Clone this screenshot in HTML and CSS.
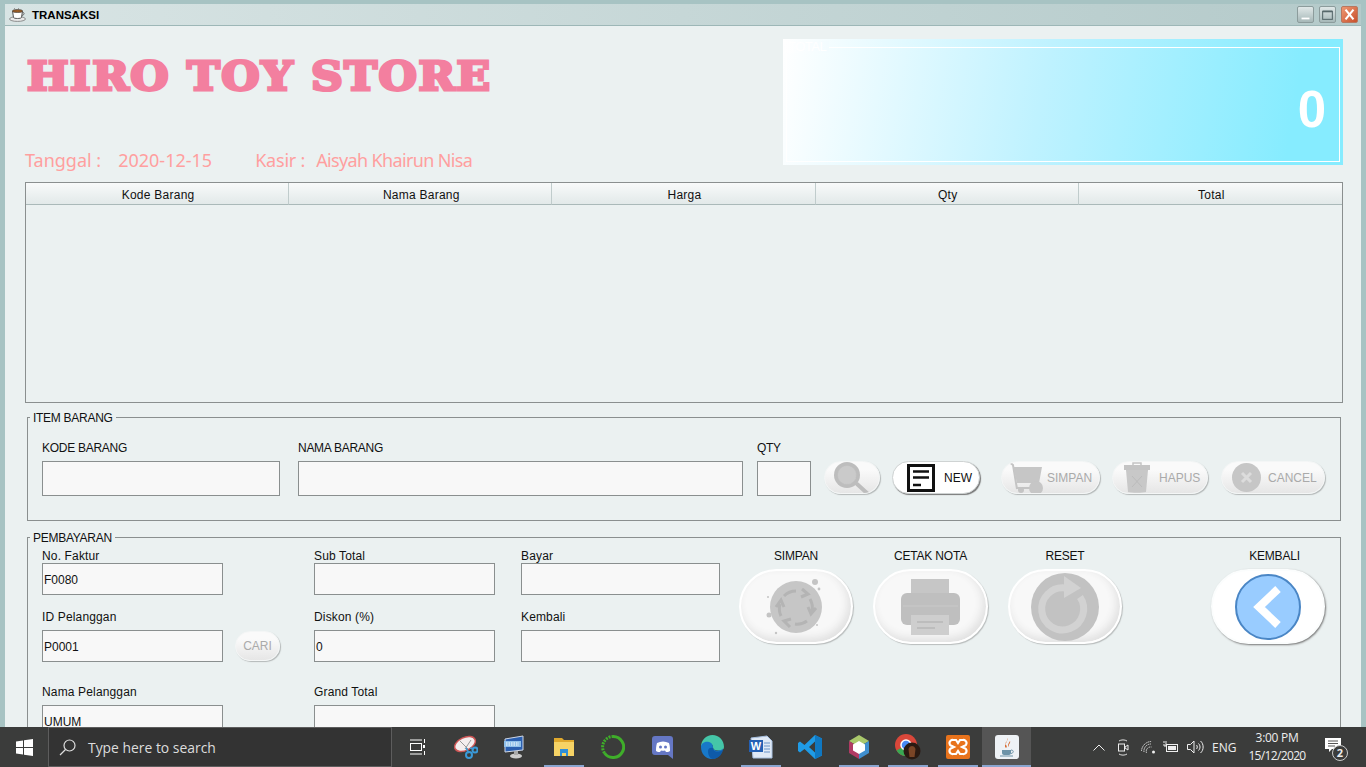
FILE: index.html
```html
<!DOCTYPE html>
<html lang="id">
<head>
<meta charset="utf-8">
<title>TRANSAKSI</title>
<link rel="stylesheet" href="styles.css">
</head>
<body>
<div class="screen">
  <main class="window">
    <header class="titlebar">
      <svg class="title-icon" viewBox="0 0 17 14"><ellipse cx="8.5" cy="11" rx="8" ry="2.4" fill="#e8e8e8" stroke="#777" stroke-width=".8"/><path d="M3.5 3h10l-1 6.5c-.3 1.3-7.700 1.300-8 0z" fill="#fff" stroke="#555"/><ellipse cx="8.500" cy="3" rx="5" ry="1.500" fill="#9a5b22" stroke="#444" stroke-width=".7"/><path d="M13.300 4.500c2.500-.5 2.500 2.500-.5 3" fill="none" stroke="#666"/><path d="M5 1l1-1M9 1l1-1" stroke="#999"/></svg>
      <span class="title-text">TRANSAKSI</span>
      <div class="win-controls">
        <span class="win-btn"><svg viewBox="0 0 17 17"><path d="M4 13h9" stroke="#fff" stroke-width="2"/></svg></span>
        <span class="win-btn"><svg viewBox="0 0 17 17"><rect x="3" y="5" width="11" height="9" fill="none" stroke="#56686a" stroke-width="1.200"/><path d="M3 5h11" stroke="#56686a" stroke-width="2"/></svg></span>
        <span class="win-btn win-close"><svg viewBox="0 0 17 17"><path d="M4 3l9 11M13 3L4 14" stroke="#fff" stroke-width="2.400"/></svg></span>
      </div>
    </header>

    <div class="content">
      <section class="head">
        <div class="brand">
          <h1 class="store">HIRO TOY STORE</h1>
          <p class="meta"><span class="meta-date">Tanggal :</span><span class="meta-date-v">2020-12-15</span><span class="meta-kasir">Kasir :</span><span class="meta-kasir-v">Aisyah Khairun Nisa</span></p>
        </div>
        <div class="total"><span class="total-legend">TOTAL</span><div class="total-inner">0</div></div>
      </section>

      <section class="table">
        <div class="thead">
          <div class="th">Kode Barang</div>
          <div class="th">Nama Barang</div>
          <div class="th">Harga</div>
          <div class="th">Qty</div>
          <div class="th th-last">Total</div>
        </div>
      </section>

      <section class="group group-item">
        <span class="legend caps">ITEM BARANG</span>
        <div class="item-row">
          <div class="field w-kode"><label class="label caps lb-6">KODE BARANG</label><div class="input in-35"></div></div>
          <div class="field w-nama"><label class="label caps lb-6">NAMA BARANG</label><div class="input in-35"></div></div>
          <div class="field w-qty"><label class="label caps lb-6">QTY</label><div class="input in-35"></div></div>
          <div class="pills">
            <button class="pill p-search off">
              <svg class="ic-search" viewBox="0 0 36 33"><circle cx="13" cy="13" r="13" fill="#bdbdbd"/><circle cx="13" cy="13" r="9.500" fill="#cacaca" stroke="#bfbfbf" stroke-dasharray="1 1"/><path d="M23 22l11 10" stroke="#bdbdbd" stroke-width="4" stroke-linecap="round"/></svg>
            </button>
            <button class="pill p-new">
              <svg class="ic-new" viewBox="0 0 28 28"><rect x="1.500" y="1.500" width="25" height="25" fill="#fff" stroke="#111" stroke-width="3"/><path d="M6 7.500h16M6 13.500h16" stroke="#111" stroke-width="2.500"/><path d="M6 21h8" stroke="#111" stroke-width="2.500"/></svg>
              <span class="pill-text">NEW</span>
            </button>
            <button class="pill p-simpan off">
              <svg class="ic-cart" viewBox="0 0 36 34"><path d="M1 1l4 3 4 24" fill="none" stroke="#c4c4c4" stroke-width="2"/><path d="M5 6h29l-3 16H9z" fill="#c6c6c6"/><path d="M8 27h18" stroke="#c4c4c4" stroke-width="2"/><circle cx="13" cy="29" r="3" fill="#c4c4c4"/><circle cx="28" cy="27" r="7" fill="#c6c6c6"/></svg>
              <span class="pill-text">SIMPAN</span>
            </button>
            <button class="pill p-hapus off">
              <svg class="ic-bin" viewBox="0 0 26 31"><path d="M9 3V1h8v2" fill="none" stroke="#c4c4c4" stroke-width="1.500"/><path d="M0 3h26v5H0z" fill="#c4c4c4"/><path d="M2 8h22l-2 22c-3 1-15 1-18 0z" fill="#c8c8c8"/><path d="M8 14l10 11M18 14L8 25" stroke="#bcbcbc"/></svg>
              <span class="pill-text">HAPUS</span>
            </button>
            <button class="pill p-cancel off">
              <svg class="ic-cancel" viewBox="0 0 29 29"><circle cx="14.500" cy="14.500" r="14.500" fill="#c6c6c6"/><path d="M10 10l9 9M19 10l-9 9" stroke="#dcdcdc" stroke-width="3"/></svg>
              <span class="pill-text">CANCEL</span>
            </button>
          </div>
        </div>
      </section>

      <section class="group group-pay">
        <span class="legend caps">PEMBAYARAN</span>
        <div class="pay">
          <div class="pay-grid">
            <div class="field"><label class="label">No. Faktur</label><div class="input in-32">F0080</div></div>
            <div></div>
            <div class="field"><label class="label">Sub Total</label><div class="input in-32"></div></div>
            <div></div>
            <div class="field"><label class="label">Bayar</label><div class="input in-32"></div></div>

            <div class="field"><label class="label lb-6">ID Pelanggan</label><div class="input in-32">P0001</div></div>
            <div><button class="pill p-cari off"><span class="pill-text">CARI</span></button></div>
            <div class="field"><label class="label lb-6">Diskon (%)</label><div class="input in-32">0</div></div>
            <div></div>
            <div class="field"><label class="label lb-6">Kembali</label><div class="input in-32"></div></div>

            <div class="field"><label class="label lb-6">Nama Pelanggan</label><div class="input in-32 in-umum">UMUM</div></div>
            <div></div>
            <div class="field"><label class="label lb-6">Grand Total</label><div class="input in-32"></div></div>
          </div>
          <div class="actions">
            <div class="action a-simpan">
              <span class="label caps-s lb-6 center">SIMPAN</span>
              <button class="big off">
                <svg class="ic-52" viewBox="0 0 64 64"><circle cx="32" cy="32" r="26" fill="#c6c6c6"/><path d="M20 21a17 17 0 0 1 12-5M38 14l6 5-7 3M46 24a17 17 0 0 1 2 12M52 33l-5 6-3-7M43 46a17 17 0 0 1-12 3M26 52l-6-6 7-2M17 41a17 17 0 0 1-1-12M12 32l5-7 3 7" fill="none" stroke="#b4b4b4" stroke-width="3"/><circle cx="51" cy="7" r="3" fill="#c4c4c4"/><circle cx="55" cy="14" r="1.400" fill="#c4c4c4"/><circle cx="4" cy="22" r="1" fill="#c4c4c4"/><circle cx="5" cy="40" r="2.500" fill="#c4c4c4"/><circle cx="53" cy="50" r="1" fill="#c4c4c4"/><circle cx="12" cy="58" r="1.200" fill="#c4c4c4"/></svg>
              </button>
            </div>
            <div class="action a-cetak">
              <span class="label caps-s lb-6 center">CETAK NOTA</span>
              <button class="big off">
                <svg class="ic-print" viewBox="0 0 59 56"><path d="M10 0h38v16H10z" fill="#c6c6c6"/><rect x="0" y="14" width="59" height="32" rx="6" fill="#bfbfbf"/><path d="M2 26h55v2H2z" fill="#c4c4c4"/><rect x="10" y="36" width="38" height="20" fill="#cecece"/><path d="M16 43h26M16 49h18" stroke="#bdbdbd" stroke-width="2"/></svg>
              </button>
            </div>
            <div class="action a-reset">
              <span class="label caps-s lb-6 center">RESET</span>
              <button class="big off">
                <svg class="ic-68" viewBox="0 0 68 68"><circle cx="34" cy="34" r="34" fill="#c2c2c2"/><path d="M49 24a21 21 0 1 1-15-9" fill="none" stroke="#d2d2d2" stroke-width="7"/><path d="M33 3l17 12-17 10z" fill="#d2d2d2"/></svg>
              </button>
            </div>
            <div class="action a-kembali">
              <span class="label caps-s lb-6 center shift">KEMBALI</span>
              <button class="big">
                <svg class="ic-66" viewBox="0 0 66 66"><circle cx="33" cy="33" r="32" fill="#99ccff" stroke="#4a86c5" stroke-width="2"/><path d="M43 15L24 33l19 18" fill="none" stroke="#fff" stroke-width="8"/></svg>
              </button>
            </div>
          </div>
        </div>
      </section>
    </div>
  </main>

  <footer class="taskbar">
    <div class="start"><svg class="ic-start" viewBox="0 0 17 17"><path d="M0 2.400l7-1v6.600H0zM8 1.300L17 0v8H8zM0 9h7v6.600l-7-1zM8 9h9v8l-9-1.300z" fill="#fff"/></svg></div>
    <div class="search">
      <svg class="ic-find" viewBox="0 0 17 17"><circle cx="10.500" cy="6.500" r="5.500" fill="none" stroke="#ddd" stroke-width="1.200"/><path d="M6.500 10.500L1 16" stroke="#ddd" stroke-width="1.200"/></svg>
      <span class="search-text">Type here to search</span>
    </div>
    <div class="apps">
      <div class="app"><svg class="ic-task" viewBox="0 0 16 16"><path d="M1 1h12M1 15h12" stroke="#fff"/><rect x="1.500" y="4.500" width="11" height="7" fill="none" stroke="#fff"/><path d="M15.500 0v4M15.500 12v4" stroke="#fff"/><rect x="14" y="6" width="2" height="3" fill="#fff"/></svg></div>
      <div class="app"><svg class="ic-app" viewBox="0 0 24 24"><ellipse cx="11" cy="9" rx="11" ry="6.500" transform="rotate(-25 11 9)" fill="#f4eeee" stroke="#c55" stroke-width="1.500"/><path d="M6 6l8 8M17 5l-6 9" stroke="#999"/><circle cx="15" cy="20" r="3" fill="none" stroke="#3a9ad9" stroke-width="2"/><circle cx="21" cy="15" r="2.500" fill="none" stroke="#3a9ad9" stroke-width="2"/><path d="M12 13l3 5M16 13l4 1" stroke="#3a9ad9" stroke-width="1.500"/></svg></div>
      <div class="app"><svg class="ic-app" viewBox="0 0 24 24"><path d="M2 4l18-3v14L2 17z" fill="#2a5fb0" stroke="#cfd8e8"/><path d="M1 6h17v6H1z" fill="#8fc0ea"/><path d="M3 8h13M3 10h13" stroke="#fff" stroke-dasharray="1.500 1"/><ellipse cx="13" cy="21" rx="6" ry="2.500" fill="#ccc"/><path d="M11 16h4v4h-4z" fill="#aaa"/></svg></div>
      <div class="app"><svg class="ic-app" viewBox="0 0 24 24"><path d="M2 3h8l2 2h10v4H2z" fill="#e0a92d"/><path d="M2 7h20v14H2z" fill="#f6d365"/><path d="M8 14h8v7h-2v-3h-4v3H8z" fill="#2f8fd8"/><path d="M10 18h4v3h-4z" fill="#f6d365"/></svg></div>
      <div class="app"><svg class="ic-app" viewBox="0 0 24 24"><path d="M12 1.500a10.500 10.500 0 1 1-8.500 16.500" fill="none" stroke="#3fae2a" stroke-width="3"/><path d="M3.500 18A10.500 10.500 0 0 1 12 1.500" fill="none" stroke="#3fae2a" stroke-width="3" stroke-dasharray="2 1"/></svg></div>
      <div class="app"><svg class="ic-app" viewBox="0 0 24 24"><path d="M4 1h15a3 3 0 0 1 3 3v20l-5-4H4a3 3 0 0 1-3-3V4a3 3 0 0 1 3-3z" fill="#6577c4"/><path d="M6 8c4-2 8-2 12 0 1 3 1 6 1 8-1 1-3 1-4 1l-1-1.500c-1.500.3-2.500.3-4 0L9 17c-1 0-3 0-4-1 0-2 0-5 1-8z" fill="#fff"/><circle cx="9.500" cy="12" r="1.500" fill="#6577c4"/><circle cx="14.500" cy="12" r="1.500" fill="#6577c4"/></svg></div>
      <div class="app"><svg class="ic-app" viewBox="0 0 24 24"><path d="M1 12C1 5 6 0 12.500 0 19 0 24 5 24 12c0 3-3 4-6 3.500-3 0-5-1-5-3 0-3-2-4.500-4.500-4.500C5 8 2 10 1 12z" fill="#45c6a8"/><path d="M1 12c0-3 3-6 8-5 4 1 4 5 4 5.500 0 3 4 3.500 6 3 1 0 3-1 4-2-1 6-6 10.500-11 10.500C5 24 1 18 1 12z" fill="#1878c8"/><path d="M8 16c0-3 3-4 5-3 0 3 3 4 6 3.500 1 0 3-1 4-2-1 6-6 9.500-10 9.500-3 0-5-4-5-8z" fill="#0e5aa8"/></svg></div>
      <div class="app"><svg class="ic-app" viewBox="0 0 24 24"><path d="M2 3l16-2 5 5v17H4z" fill="#dfe9f6" stroke="#a8c0e0"/><rect x="0" y="5" width="14" height="12" fill="#2460b4"/><text class="ic-letter" x="7" y="15" text-anchor="middle">W</text><path d="M15 8h6M15 11h6M15 14h6M15 17h6" stroke="#6a93c8"/></svg></div>
      <div class="app"><svg class="ic-app" viewBox="0 0 24 24"><path d="M17 0l7 3.500v17L17 24 6.500 14 2 17.500 0 16v-8l2-1.500L6.500 10zM17 6.500L11 12l6 5.500z" fill="#1f9be6"/><path d="M17 0l7 3.500v17L17 24z" fill="#0f78c2"/></svg></div>
      <div class="app"><svg class="ic-app" viewBox="0 0 24 24"><path d="M12 0l10 6-10 6L2 6z" fill="#a9c86b"/><path d="M2 6l10 6v12L2 18z" fill="#b03a63"/><path d="M22 6l-10 6v12l10-6z" fill="#3f8fcf"/><path d="M12 6l6 3.500v6L12 19l-6-3.500v-6z" fill="#fff"/></svg></div>
      <div class="app"><svg class="ic-chrome" viewBox="0 0 26 26"><circle cx="11" cy="11" r="11" fill="#d9473a"/><path d="M11 11L1.500 16.500A11 11 0 0 0 11 22z" fill="#38a852"/><path d="M11 11v11A11 11 0 0 0 22 11z" fill="#f7c92c"/><circle cx="11" cy="11" r="5" fill="#4a8af4" stroke="#fff" stroke-width="1.500"/><circle cx="17" cy="17" r="8.500" fill="#2a1a12"/><path d="M13.500 15c1-4 6-4 7 0l-1 8h-5z" fill="#7a4526"/></svg></div>
      <div class="app"><svg class="ic-app" viewBox="0 0 24 24"><rect width="24" height="24" rx="2" fill="#e8731c"/><path d="M7 5h3l2 3 2-3h3a3 3 0 0 1 1 6l-2 1 2 1a3 3 0 0 1-1 6h-3l-2-3-2 3H7a3 3 0 0 1-1-6l2-1-2-1a3 3 0 0 1 1-6z" fill="none" stroke="#fff" stroke-width="2.200"/></svg></div>
      <div class="app app-java"><svg class="ic-java" viewBox="0 0 24 24"><rect width="24" height="24" rx="3" fill="#eef2f6"/><path d="M7 15h9v3c0 1-1 2-2 2h-5c-1 0-2-1-2-2z" fill="#6d93a8"/><path d="M5 21h13" stroke="#6d93a8"/><path d="M16 15c3 0 3 3 0 3.500" fill="none" stroke="#6d93a8"/><path d="M12 3c2 3-3 4-1 7 1 1 1 2 0 3-3-3 2-5 1-10z" fill="#d5652a"/><path d="M15 6c1 2-2 3-1 6-2-2 0-4 1-6z" fill="#d5652a"/></svg></div>
    </div>
    <div class="tray">
      <svg class="tr-caret" viewBox="0 0 12 7"><path d="M.5 6.500L6 1l5.500 5.500" fill="none" stroke="#eee"/></svg>
      <svg class="tr-cam" viewBox="0 0 12 17"><path d="M2 2c2-1.500 6-1.500 8 0M2 15c2 1.500 6 1.500 8 0" fill="none" stroke="#ddd"/><rect x="1.500" y="5" width="6" height="7" fill="none" stroke="#eee"/><path d="M8 8l3-2v5l-3-2z" fill="none" stroke="#eee"/></svg>
      <svg class="tr-wifi" viewBox="0 0 15 13"><path d="M.5 10a10 10 0 0 1 10-9.500M3 11a7 7 0 0 1 7-8M5.500 12a4.500 4.500 0 0 1 5-6" fill="none" stroke="#ddd" stroke-dasharray="1.500 .7"/><circle cx="12.500" cy="11" r="1.500" fill="#eee"/></svg>
      <svg class="tr-batt" viewBox="0 0 16 12"><path d="M0 1h2M0 4h2M3 0v5H1" stroke="#eee" fill="none"/><rect x="3.500" y="3.500" width="11" height="7" fill="none" stroke="#eee"/><rect x="5" y="5" width="8" height="4" fill="#eee"/></svg>
      <svg class="tr-vol" viewBox="0 0 17 14"><path d="M.5 4.500h3L7 1v12L3.500 9.500h-3z" fill="none" stroke="#eee"/><path d="M9.500 5c1 1 1 3 0 4M11.500 3.500c2 2 2 5 0 7M13.500 1c3.500 3 3.500 9 0 12" fill="none" stroke="#eee"/></svg>
      <span class="tr-lang">ENG</span>
      <div class="clock"><span class="clock-time">3:00 PM</span><span class="clock-date">15/12/2020</span></div>
      <div class="notif">
        <svg class="ic-notif" viewBox="0 0 16 15"><path d="M0 0h16v11H7l-3 3v-3H0z" fill="#fff"/><path d="M3 3h10M3 5.500h10M3 8h7" stroke="#555"/></svg>
        <span class="badge">2</span>
      </div>
    </div>
  </footer>
</div>
</body>
</html>
```

FILE: styles.css
```css
* { box-sizing: border-box; }
html, body { margin: 0; padding: 0; }
body { font-family: "Liberation Sans", Arial, sans-serif; font-size: 12px; color: #111; }
.screen { width: 1366px; height: 767px; overflow: hidden; display: flex; flex-direction: column; }

.window { height: 727px; flex: none; overflow: hidden; background: #a7c3c3; padding: 4px 5px 0 5px; display: flex; flex-direction: column; }
.titlebar { height: 22px; flex: none; display: flex; align-items: center; background: linear-gradient(90deg, #d8e4e4, #b4caca); border-bottom: 1px solid #9db7b7; padding-left: 4px; }
.title-icon { width: 17px; height: 14px; margin-right: 6px; }
.title-text { font-weight: bold; font-size: 11.500px; color: #000; }
.win-controls { margin-left: auto; display: flex; gap: 5px; padding-right: 3px; }
.win-btn { width: 17px; height: 17px; border: 1px solid #8c9c9c; border-radius: 2px; background: linear-gradient(#e0e8e8, #a6b8b8); display: block; }
.win-btn svg { display: block; width: 15px; height: 15px; }
.win-close { background: linear-gradient(135deg, #ee9872, #c8502c); border-color: #b8775f; }

.content { flex: 1; background: #ebf1f1; padding: 13px 18px 0 20px; min-height: 0; overflow: hidden; }

.head { height: 126px; display: flex; justify-content: space-between; }
.brand { display: flex; flex-direction: column; justify-content: space-between; }
.store { margin: 12px 0 0 2px; font-family: "DejaVu Serif", serif; font-weight: bold; font-size: 40px; line-height: 50px; letter-spacing: 1.400px; color: #f37f9f; -webkit-text-stroke: 3px #f37f9f; white-space: nowrap; transform: scaleX(1.1); transform-origin: left center; }
.meta { margin: 0 0 -7px; font-family: "Noto Sans", sans-serif; font-size: 18px; line-height: 24px; color: #ff9f9f; white-space: nowrap; height: 24px; }
.meta-date-v { margin-left: 17px; }
.meta-kasir { margin-left: 43px; letter-spacing: -0.200px; }
.meta-kasir-v { margin-left: 11px; letter-spacing: -0.650px; }
.total { position: relative; width: 560px; background: linear-gradient(100deg, #ffffff 0%, #bff2ff 46%, #86ecff 90%); padding: 8px 3px 3px 3px; }
.total-legend { position: absolute; left: 2px; top: 2px; padding: 0 3px; background: linear-gradient(90deg, #fff, #f3fcff); color: #fff; font-size: 13px; letter-spacing: -0.500px; line-height: 12px; }
.total-inner { height: 100%; border: 1px solid #fff; color: #fff; font-weight: bold; font-size: 51px; display: flex; align-items: center; justify-content: flex-end; padding: 10px 13px 0 0; }

.table { margin-top: 17px; height: 221px; border: 1px solid #8a8f8f; }
.thead { display: grid; grid-template-columns: repeat(5, 1fr); height: 22px; }
.th { display: flex; align-items: center; justify-content: center; font-size: 12px; letter-spacing: 0.250px; color: #111; background: linear-gradient(#f8fafa, #e2e9e9); border-bottom: 1px solid #aab9b9; border-right: 1px solid #c0cccc; padding: 2px 0 0 2px; }
.th-last { border-right: 0; }

.group { position: relative; margin: 0 2px; border: 1px solid #8a8f8f; }
.legend { position: absolute; left: 2px; top: -7px; background: #ebf1f1; padding: 0 3px; line-height: 14px; font-size: 12px; }
.group-item { margin-top: 14px; height: 104px; padding: 23px 14px 0 14px; }
.group-pay { margin-top: 16px; height: 300px; padding: 11px 14px 0 14px; }

.item-row { display: flex; gap: 18px; }
.field { display: flex; flex-direction: column; }
.w-kode { width: 238px; }
.w-nama { width: 445px; margin-right: -4px; }
.w-qty { width: 54px; }
.label { display: block; line-height: 14px; font-size: 12px; letter-spacing: 0.150px; color: #111; white-space: nowrap; }
.caps { letter-spacing: -0.280px; }
.caps-s { letter-spacing: -0.200px; }
.lb-6 { margin-bottom: 6px; }
.center { text-align: center; }
.shift { padding-left: 13px; }
.input { background: #f8f8f8; border: 1px solid #8a8f8f; font-size: 12px; color: #111; display: flex; align-items: center; padding: 2px 0 0 1px; }
.in-35 { height: 35px; }
.in-32 { height: 32px; }
.in-umum { align-items: flex-start; padding-top: 9px; height: 40px; }

.pills { display: flex; padding-top: 20px; margin-left: -5px; }
.pill { height: 33px; border: 1px solid #cfd3d3; border-radius: 17px; padding: 0; display: flex; align-items: center; font-family: "Liberation Sans", sans-serif; font-size: 12px; color: #111; background: #fff; box-shadow: 1px 1px 1px #777; overflow: hidden; flex: none; }
.pill.off { background: linear-gradient(#fafafa 25%, #e6e6e6); color: #aaa; border-color: #f4f6f6; box-shadow: 1px 1px 1px #b4b8b8; }
.p-search { width: 56px; margin-right: 12px; padding-left: 9px; align-items: flex-start; }
.p-new { width: 88px; margin-right: 21px; padding-left: 14px; }
.p-simpan { width: 99px; margin-right: 12px; padding-left: 6px; }
.p-hapus { width: 96px; margin-right: 13px; padding-left: 11px; }
.p-cancel { width: 104px; padding-left: 10px; }
.p-cari { width: 45px; height: 30px; margin: 21px 0 0 12px; justify-content: center; }
.ic-search { width: 36px; height: 33px; flex: none; }
.ic-new { width: 28px; height: 28px; flex: none; margin-right: 9px; }
.ic-cart { width: 36px; height: 34px; flex: none; margin-right: 3px; }
.ic-bin { width: 26px; height: 31px; flex: none; margin-right: 9px; }
.ic-cancel { width: 29px; height: 29px; flex: none; margin-right: 7px; }
.pill-text { white-space: nowrap; }

.pay { display: flex; }
.pay-grid { display: grid; width: 678px; grid-template-columns: 181px 91px 181px 26px 199px; grid-template-rows: 61px 75px auto; }
.actions { display: flex; margin-left: 19px; }
.action { display: flex; flex-direction: column; width: 114px; flex: none; }
.a-simpan { margin-right: 20px; }
.a-cetak { width: 115px; margin-right: 20px; }
.a-reset { margin-right: 89px; }
.big { height: 75px; border: 2px solid #fbfdfd; border-radius: 38px; padding: 0; display: flex; align-items: center; justify-content: center; background: #fff; box-shadow: 1px 1px 2px #777; }
.big.off { background: #f8f8f8; border-color: #fff; box-shadow: 1px 1px 1px #b8bcbc, inset -3px -4px 8px #e0e0e0; }
.ic-52 { width: 64px; height: 64px; }
.ic-print { width: 59px; height: 56px; }
.ic-68 { width: 68px; height: 68px; }
.ic-66 { width: 66px; height: 66px; }

.taskbar { height: 40px; flex: none; background: #3b3c3b; display: flex; align-items: center; color: #eee; }
.start { width: 48px; height: 40px; display: flex; align-items: center; justify-content: center; }
.ic-start { width: 17px; height: 17px; }
.search { width: 344px; height: 40px; background: #333; border: 1px solid #5d5d5d; display: flex; align-items: center; padding-left: 10px; }
.ic-find { width: 17px; height: 17px; margin-right: 12px; }
.search-text { font-family: "Open Sans", sans-serif; font-size: 13.900px; color: #ddd; white-space: nowrap; }
.apps { display: flex; height: 40px; }
.app { width: 49.200px; height: 40px; flex: none; display: flex; align-items: center; justify-content: center; }
.app:nth-child(4), .app:nth-child(8), .app:nth-child(10), .app:nth-child(11), .app:nth-child(12) { background: linear-gradient(#8aa5d0, #8aa5d0) center bottom / 40px 2px no-repeat; }
.app-java { background: #555 linear-gradient(#8aa5d0, #8aa5d0) center bottom / 100% 2px no-repeat; }
.ic-task { width: 16px; height: 16px; }
.ic-app { width: 24px; height: 24px; }
.ic-chrome { width: 26px; height: 26px; }
.ic-java { width: 24px; height: 24px; }
.ic-letter { font-family: "Liberation Sans", sans-serif; font-size: 11px; font-weight: bold; fill: #fff; }
.tray { margin-left: auto; display: flex; align-items: center; height: 40px; }
.tr-caret { width: 12px; height: 7px; margin-right: 12px; }
.tr-cam { width: 12px; height: 17px; margin-right: 12px; }
.tr-wifi { width: 15px; height: 13px; margin-right: 7px; }
.tr-batt { width: 16px; height: 12px; margin-right: 8px; }
.tr-vol { width: 17px; height: 14px; margin-right: 8px; }
.tr-lang { font-family: "Open Sans", sans-serif; font-size: 12px; width: 25px; margin-right: 7px; }
.clock { width: 66px; display: flex; flex-direction: column; align-items: center; font-family: "Open Sans", sans-serif; font-size: 12px; line-height: 18px; white-space: nowrap; margin-right: 15px; }
.clock-time { letter-spacing: -0.300px; }
.clock-date { letter-spacing: -0.650px; }
.notif { position: relative; width: 41px; height: 40px; display: flex; align-items: center; }
.ic-notif { width: 16px; height: 15px; margin-top: -4px; }
.badge { position: absolute; left: 7px; top: 18px; width: 16px; height: 16px; border-radius: 50%; border: 1px solid #ccc; background: #3b3c3b; font-family: "Open Sans", sans-serif; font-size: 11px; font-weight: bold; line-height: 14px; text-align: center; color: #eee; }
```
